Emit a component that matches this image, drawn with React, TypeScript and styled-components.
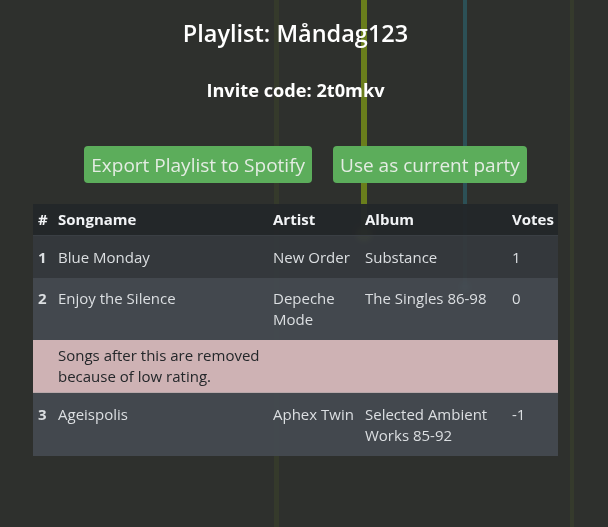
import styled, { createGlobalStyle } from 'styled-components';

const GlobalStyle = createGlobalStyle`
  html, body {
    margin: 0;
    padding: 0;
    background-color: #2e302d;
    font-family: 'Open Sans', 'Liberation Sans', sans-serif;
    color: #dcdfe2;
  }
`;

// 배경 라인 (장식용)
const Backdrop = styled.svg`
  position: fixed;
  left: 0;
  top: 0;
  width: 608px;
  height: 527px;
  z-index: 0;
  pointer-events: none;
`;

const Page = styled.main`
  position: relative;
  z-index: 1;
  min-height: 100vh;
  box-sizing: border-box;
  width: 525px;
  margin-left: 33px;
  padding-top: 18px;
  display: flex;
  flex-direction: column;
  align-items: center;
`;

const Title = styled.h3`
  margin: 0;
  font-size: 23.5px;
  line-height: 30px;
  font-weight: 600;
  color: #ffffff;
`;

const InviteCode = styled.h5`
  margin: 30px 0 0;
  font-size: 18.2px;
  line-height: 24px;
  font-weight: 700;
  color: #ffffff;
`;

const ButtonRow = styled.div`
  margin-top: 44px;
  align-self: stretch;
  padding-left: 20px;
  display: flex;
  justify-content: center;
  gap: 21px;
`;

const GreenButton = styled.button`
  height: 37px;
  padding: 0 7px;
  border: none;
  border-radius: 4px;
  background-color: #5cad5b;
  color: #e4ece3;
  font-family: inherit;
  font-size: 19px;
  cursor: pointer;
`;

const Table = styled.table`
  margin-top: 21px;
  width: 525px;
  border-collapse: collapse;
  table-layout: fixed;
  font-size: 15px;
  line-height: 21px;
`;

const HeadCell = styled.th<{ w: number }>`
  box-sizing: border-box;
  width: ${(p) => p.w}px;
  padding: 5px 5px;
  text-align: left;
  font-weight: 700;
  color: #f2f4f6;
  background-color: rgba(35, 38, 42, 0.96);
  border-bottom: 1px solid #3a3f44;
`;

const Row = styled.tr<{ tone: 'dark' | 'light' | 'danger' }>`
  background-color: ${(p) =>
    p.tone === 'dark'
      ? 'rgba(53, 57, 61, 0.95)'
      : p.tone === 'light'
      ? 'rgba(69, 74, 80, 0.95)'
      : 'rgba(209, 181, 183, 0.98)'};
  color: ${(p) => (p.tone === 'danger' ? '#24272a' : '#dcdfe2')};
  ${(p) => p.tone === 'danger' && 'border-bottom: 1px solid #b9a8aa;'}
`;

const Cell = styled.td<{ tight?: boolean }>`
  box-sizing: border-box;
  padding: ${(p) => (p.tight ? '5px 5px 5px' : '10.5px 5px 10px')};
  vertical-align: top;
`;

const Num = styled(Cell)`
  font-weight: 700;
`;

const songs = [
  { id: 1, name: 'Blue Monday', artist: 'New Order', album: 'Substance', votes: 1 },
  { id: 2, name: 'Enjoy the Silence', artist: 'Depeche Mode', album: 'The Singles 86-98', votes: 0 },
  { id: 3, name: 'Ageispolis', artist: 'Aphex Twin', album: 'Selected Ambient Works 85-92', votes: -1 },
];

const cutoff = 2;

const App = () => {
  return (
    <>
      <GlobalStyle />
      <Backdrop viewBox="0 0 608 527">
        <defs>
          <filter id="glow" x="-1" y="-1" width="3" height="3">
            <feGaussianBlur stdDeviation="2" />
          </filter>
        </defs>
        <rect x="274" y="0" width="5" height="527" fill="#353a2b" />
        <rect x="570" y="0" width="4" height="527" fill="#353a2c" />
        <rect x="361" y="0" width="6" height="234" fill="#6a7e1c" />
        <circle cx="364" cy="234" r="8" fill="#7a8e22" filter="url(#glow)" />
        <rect x="463" y="0" width="4" height="287" fill="#2c5056" />
        <circle cx="465" cy="287" r="5" fill="#3a6a72" filter="url(#glow)" />
      </Backdrop>
      <Page>
        <Title>Playlist: Måndag123</Title>
        <InviteCode>Invite code: 2t0mkv</InviteCode>
        <ButtonRow>
          <GreenButton>Export Playlist to Spotify</GreenButton>
          <GreenButton>Use as current party</GreenButton>
        </ButtonRow>
        <Table>
          <thead>
            <tr>
              <HeadCell w={20}>#</HeadCell>
              <HeadCell w={215}>Songname</HeadCell>
              <HeadCell w={92}>Artist</HeadCell>
              <HeadCell w={147}>Album</HeadCell>
              <HeadCell w={51}>Votes</HeadCell>
            </tr>
          </thead>
          <tbody>
            {songs.map((s, idx) => (
              <>
                {idx === cutoff && (
                  <Row tone="danger" key="cut">
                    <Cell tight />
                    <Cell tight>Songs after this are removed because of low rating.</Cell>
                    <Cell tight />
                    <Cell tight />
                    <Cell tight />
                  </Row>
                )}
                <Row tone={idx === 0 ? 'dark' : 'light'} key={s.id}>
                  <Num>{s.id}</Num>
                  <Cell>{s.name}</Cell>
                  <Cell>{s.artist}</Cell>
                  <Cell>{s.album}</Cell>
                  <Cell>{s.votes}</Cell>
                </Row>
              </>
            ))}
          </tbody>
        </Table>
      </Page>
    </>
  );
};

export default App;
